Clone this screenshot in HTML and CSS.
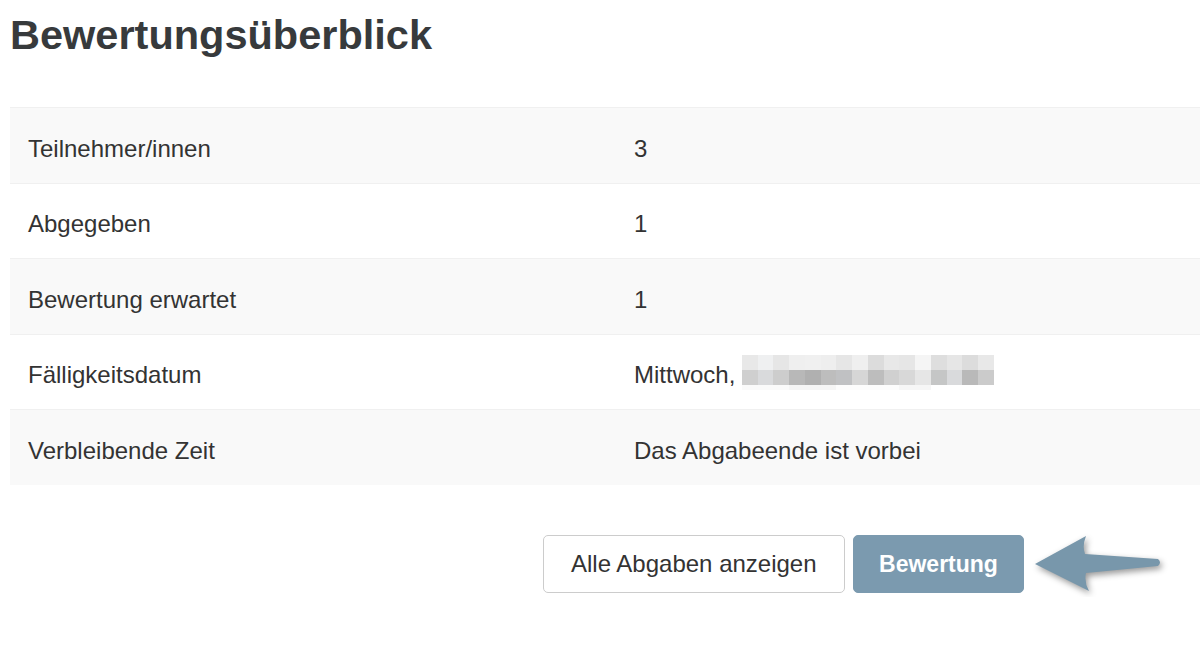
FILE: index.html
```html
<!DOCTYPE html>
<html lang="de">
<head>
  <meta charset="UTF-8">
  <title>Bewertungsüberblick</title>
  <meta name="viewport" content="width=device-width, initial-scale=1.0">
  <link rel="stylesheet" href="styles.css">
</head>
<body>
  <h1>Bewertungsüberblick</h1>

  <table class="summary">
    <tr><td>Teilnehmer/innen</td><td>3</td></tr>
    <tr><td>Abgegeben</td><td>1</td></tr>
    <tr><td>Bewertung erwartet</td><td>1</td></tr>
    <tr><td>Fälligkeitsdatum</td><td>Mittwoch, <span class="blurred"></span></td></tr>
    <tr><td>Verbleibende Zeit</td><td>Das Abgabeende ist vorbei</td></tr>
  </table>

  <div class="actions">
    <button class="btn">Alle Abgaben anzeigen</button>
    <button class="btn btn-primary">Bewertung</button>
    <svg class="arrow" width="140" height="66" viewBox="0 0 140 66">
      <path d="M7 33 L58 5 Q54 15 57 23 L130 28 Q134 31.5 130 35 L58 42 Q56 51 61 60 Z" fill="#7897ab"/>
    </svg>
  </div>
</body>
</html>
```

FILE: styles.css
```css
* { box-sizing: border-box; }
body {
  margin: 0;
  padding: 0 0 0 10px;
  font-family: "Liberation Sans", Arial, sans-serif;
  color: #333;
  background: #fff;
}
h1 {
  margin: 11px 0 48px;
  font-size: 41.5px;
  line-height: 48px;
  font-weight: bold;
  color: #373a3c;
}

/* Summary table */
.summary {
  width: 100%;
  border-collapse: collapse;
  table-layout: fixed;
  font-size: 24px;
  line-height: 30px;
}
.summary tr { border-top: 1px solid #f0f0f0; }
.summary tr:nth-child(odd) { background: #f9f9f9; }
.summary td {
  padding: 25.5px 18px 19px;
  box-sizing: content-box;
}
.summary td:first-child { width: 570px; }

.blurred {
  display: inline-block;
  width: 252px;
  height: 35px;
  margin-top: -9px;
  vertical-align: -7px;
  background-repeat: no-repeat;
  background-size: 100% 15px, 100% 15px, 100% 5px;
  background-position: 0 0, 0 15px, 0 30px;
  background-image:
    linear-gradient(to right, #e8e8e8 0 6.25%, #eff0f1 6.25% 12.5%, #e6e6e6 12.5% 18.75%, #efefef 18.75% 25%, #f0f0f0 25% 31.25%, #eeeeee 31.25% 37.5%, #e6e6e6 37.5% 43.75%, #efefef 43.75% 50%, #dcdcdc 50% 56.25%, #e8e8e8 56.25% 62.5%, #e6e6e6 62.5% 68.75%, #f5f5f5 68.75% 75%, #dedede 75% 81.25%, #e6e6e6 81.25% 87.5%, #dcdcdc 87.5% 93.75%, #e8e8e8 93.75% 100%),
    linear-gradient(to right, #cfcfcf 0 6.25%, #d9dadc 6.25% 12.5%, #cdcdcd 12.5% 18.75%, #b8b8b8 18.75% 25%, #b0b0b0 25% 31.25%, #bdbdbd 31.25% 37.5%, #c0c1c3 37.5% 43.75%, #d6d6d6 43.75% 50%, #bdbdbd 50% 56.25%, #d0d0d0 56.25% 62.5%, #d8d8d8 62.5% 68.75%, #e6e6e6 68.75% 75%, #c5c6c6 75% 81.25%, #d9dadc 81.25% 87.5%, #b9b9b9 87.5% 93.75%, #cbcbcb 93.75% 100%),
    linear-gradient(to right, #fafafa 0 18.75%, #f5f5f5 18.75% 37.5%, #fcfcfc 37.5% 62.5%, #f6f6f6 62.5% 75%, #fff 75% 100%);
}

/* Buttons */
.actions {
  display: flex;
  align-items: center;
  gap: 8px;
  margin-top: 46px;
  padding-left: 533px;
}
.btn {
  font-family: "Liberation Sans", Arial, sans-serif;
  font-size: 24px;
  line-height: 30px;
  height: 58px;
  padding: 13px 27px;
  border: 1px solid #cccccc;
  border-radius: 5px;
  background: #fff;
  color: #333;
  cursor: pointer;
}
.btn-primary {
  background: #7b9aaf;
  border-color: #7b9aaf;
  color: #fff;
  font-weight: bold;
  font-size: 23px;
  padding: 13px 25.5px;
}
.arrow {
  margin-left: -4px;
  filter: drop-shadow(2px 3px 3px rgba(0, 0, 0, 0.4));
}
```
